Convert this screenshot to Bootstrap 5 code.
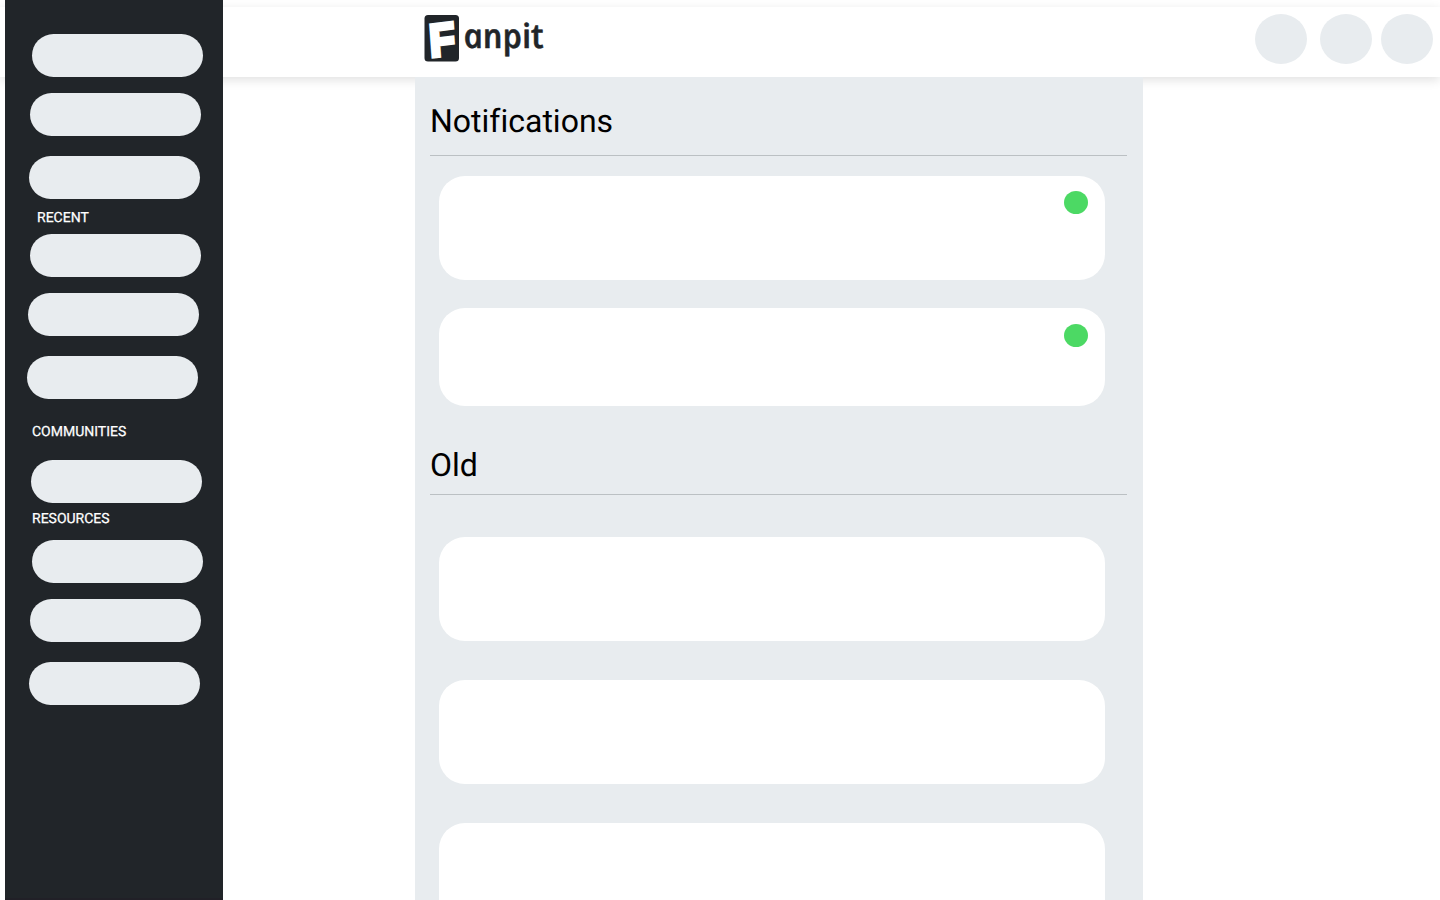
<!DOCTYPE html>
<html lang="en">
<head>
<meta charset="utf-8">
<meta name="viewport" content="width=device-width, initial-scale=1">
<title>Fanpit – Notifications</title>
<link href="https://cdn.jsdelivr.net/npm/bootstrap@5.3.0/dist/css/bootstrap.min.css" rel="stylesheet">
<style>
:root { --ink: #212529; --fog: #e8ecef; }
body { font-family: Roboto, "Liberation Sans", sans-serif; color: #000; text-rendering: geometricPrecision; }
.shell { display: grid; grid-template-columns: 5px 218px 1fr; grid-template-rows: 77px 1fr; height: 100vh; }
/* the sidebar shares the first grid row with the top bar and covers it */
.side { grid-area: 1 / 2 / 3 / 3; z-index: 2; background: var(--ink); border-bottom: 2px solid #212027; padding: 34px 0 0 27px; }
.topbar { grid-area: 1 / 1 / 2 / 4; margin-top: 7px; padding: 0 7px 0 424px; box-shadow: 0 3px 10px rgba(0,0,0,.12); }
.feed { grid-area: 2 / 3 / 3 / 4; z-index: 1; width: 728px; margin-left: 192px; padding: 0 16px 0 15px; background: var(--fog); }
.pill { width: 171px; height: 43px; background: var(--fog); margin-bottom: 16px; }
.pill.b { margin-left: -2px; margin-bottom: 20px; }
.pill.c { margin-left: -3px; margin-bottom: 0; }
.shift { margin-left: -2px; }
.side h2 { font-size: 14px; line-height: 16px; font-weight: 400; color: #fff; -webkit-text-stroke: .25px #fff; margin: 0; }
.avatar { width: 52px; height: 50px; background: var(--fog); }
.feed h1 { font-size: 32px; font-weight: 400; line-height: 38px; margin: 0; font-variant-ligatures: none; }
.rule { height: 1px; background: #bbc0c3; }
.note { width: 666px; height: 104px; border-radius: 26px; margin-left: 9px; padding: 15px 17px; }
.dot { width: 24px; height: 23px; background: #4cd964; }
</style>
</head>
<body class="bg-white overflow-hidden">
<div class="shell">
  <header class="topbar bg-white d-flex justify-content-between align-items-start">
    <a href="#" class="d-block" aria-label="Fanpit">
      <svg class="d-block mt-1" width="124" height="56" viewBox="424 11 124 56">
        <rect x="424.5" y="15" width="34.5" height="46.5" rx="3.5" fill="#212529"/>
        <text transform="translate(430.5 57) skewY(-7) skewX(4) scale(.9 1)" font-family="Liberation Sans" font-weight="700" font-size="46" fill="#fff" stroke="#fff" stroke-width="4">F</text>
        <text transform="translate(465.5 47.7) skewX(12)" font-family="Open Sans" font-style="italic" font-weight="600" font-size="34" textLength="80" lengthAdjust="spacingAndGlyphs" fill="#212529" stroke="#212529" stroke-width=".5" stroke-linejoin="round">anpit</text>
      </svg>
    </a>
    <div class="d-flex" style="padding-top:7px">
      <span class="avatar rounded-circle" style="margin-right:13px"></span>
      <span class="avatar rounded-circle" style="margin-right:9px"></span>
      <span class="avatar rounded-circle"></span>
    </div>
  </header>
  <nav class="side">
    <div class="pill rounded-pill"></div>
    <div class="pill b rounded-pill"></div>
    <div class="pill c rounded-pill"></div>
    <h2 style="margin:11px 0 8px 5px">RECENT</h2>
    <div class="shift">
      <div class="pill rounded-pill"></div>
      <div class="pill b rounded-pill"></div>
      <div class="pill c rounded-pill"></div>
    </div>
    <h2 style="margin:25px 0 20px">COMMUNITIES</h2>
    <div class="pill rounded-pill" style="margin:0 0 0 -1px"></div>
    <h2 style="margin:8px 0 13px">RESOURCES</h2>
    <div class="pill rounded-pill"></div>
    <div class="pill b rounded-pill"></div>
    <div class="pill c rounded-pill"></div>
  </nav>
  <main class="feed overflow-hidden">
    <h1 style="padding-top:25px">Notifications</h1>
    <div class="rule" style="margin:15px 0 20px"></div>
    <article class="note bg-white d-flex justify-content-end"><span class="dot rounded-circle"></span></article>
    <article class="note bg-white d-flex justify-content-end" style="margin-top:28px;height:98px;padding-top:16px"><span class="dot rounded-circle"></span></article>
    <h1 style="margin-top:40px">Old</h1>
    <div class="rule" style="margin:10px 0 42px"></div>
    <article class="note bg-white"></article>
    <article class="note bg-white" style="margin-top:39px"></article>
    <article class="note bg-white" style="margin-top:39px"></article>
  </main>
</div>
<script src="https://cdn.jsdelivr.net/npm/bootstrap@5.3.0/dist/js/bootstrap.bundle.min.js"></script>
</body>
</html>
